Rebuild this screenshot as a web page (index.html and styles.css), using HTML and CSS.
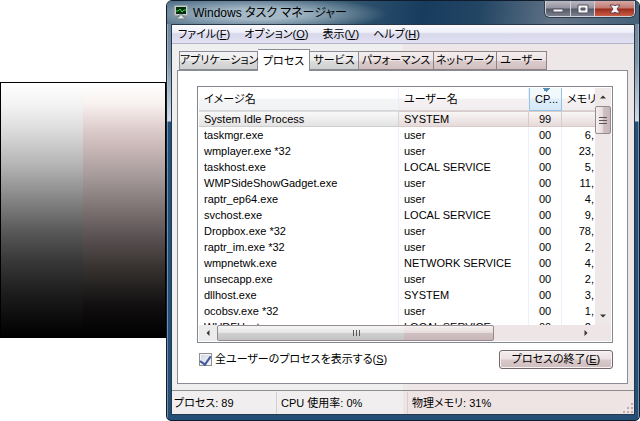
FILE: index.html
```html
<!DOCTYPE html>
<html lang="ja">
<head>
<meta charset="utf-8">
<meta name="viewport" content="width=device-width, initial-scale=1">
<title>Windows タスク マネージャー</title>
<link rel="stylesheet" href="styles.css">
</head>
<body>
<div class="desktop">
  <div class="ramp"></div>
  <main class="window">
    <header class="titlebar">
      <svg class="app-icon" viewBox="0 0 16 16" aria-hidden="true">
        <path d="M1 4v10M1 3h2" stroke="#8d9699" fill="none"/>
        <rect x="3" y="2" width="12" height="9" fill="#dde3dd" stroke="#b4bcba"/>
        <rect x="4" y="3" width="10" height="7" fill="#062c10"/>
        <path d="M4 7h2l2-2 2 3 2-2h2" stroke="#38dd43" fill="none"/>
        <path d="M7 11h4v2h2v2H5v-2h2z" fill="#e1e4e2" stroke="#737b7e"/>
      </svg>
      <h1 class="title">Windows タスク マネージャー</h1>
      <div class="controls">
        <button class="control" aria-label="最小化"><svg viewBox="0 0 12 12"><rect x="1" y="6" width="10" height="3" fill="#f5f5f5" stroke="#595563"/></svg></button>
        <button class="control" aria-label="最大化"><svg viewBox="0 0 12 12"><path fill-rule="evenodd" d="M1 2h10v8H1zM4 5v2h4V5z" fill="#f5f5f5" stroke="#595563"/></svg></button>
        <button class="control close" aria-label="閉じる"><svg viewBox="0 0 12 12"><path d="M1 2h4l1 1 1-1h4L8 6l3 4H7L6 9l-1 1H1l3-4z" fill="#f5f5f5" stroke="#6b4050"/></svg></button>
      </div>
    </header>
    <div class="client">
      <nav class="menu">
        <button>ファイル(<u>F</u>)</button>
        <button>オプション(<u>O</u>)</button>
        <button>表示(<u>V</u>)</button>
        <button>ヘルプ(<u>H</u>)</button>
      </nav>
      <div class="body">
        <div class="tabs" role="tablist">
          <button class="tab" role="tab">アプリケーション</button>
          <button class="tab active" role="tab" aria-selected="true">プロセス</button>
          <button class="tab" role="tab">サービス</button>
          <button class="tab tinted" role="tab">パフォーマンス</button>
          <button class="tab tinted" role="tab">ネットワーク</button>
          <button class="tab tinted" role="tab">ユーザー</button>
        </div>
        <section class="page">
          <div class="list">
            <div class="view">
              <table>
                <colgroup><col class="c-name"><col class="c-user"><col class="c-cpu"><col class="c-mem"></colgroup>
                <thead><tr><th>イメージ名</th><th>ユーザー名</th><th class="sorted">CP...</th><th class="mem">メモリ</th></tr></thead>
                <tbody>
                  <tr class="selected"><td>System Idle Process</td><td>SYSTEM</td><td>99</td><td></td></tr>
                  <tr><td>taskmgr.exe</td><td>user</td><td>00</td><td>6,</td></tr>
                  <tr><td>wmplayer.exe *32</td><td>user</td><td>00</td><td>23,</td></tr>
                  <tr><td>taskhost.exe</td><td>LOCAL SERVICE</td><td>00</td><td>5,</td></tr>
                  <tr><td>WMPSideShowGadget.exe</td><td>user</td><td>00</td><td>11,</td></tr>
                  <tr><td>raptr_ep64.exe</td><td>user</td><td>00</td><td>4,</td></tr>
                  <tr><td>svchost.exe</td><td>LOCAL SERVICE</td><td>00</td><td>9,</td></tr>
                  <tr><td>Dropbox.exe *32</td><td>user</td><td>00</td><td>78,</td></tr>
                  <tr><td>raptr_im.exe *32</td><td>user</td><td>00</td><td>2,</td></tr>
                  <tr><td>wmpnetwk.exe</td><td>NETWORK SERVICE</td><td>00</td><td>4,</td></tr>
                  <tr><td>unsecapp.exe</td><td>user</td><td>00</td><td>2,</td></tr>
                  <tr><td>dllhost.exe</td><td>SYSTEM</td><td>00</td><td>3,</td></tr>
                  <tr><td>ocobsv.exe *32</td><td>user</td><td>00</td><td>1,</td></tr>
                  <tr><td>WUDFHost.exe</td><td>LOCAL SERVICE</td><td>00</td><td>2,</td></tr>
                </tbody>
              </table>
            </div>
            <div class="vscroll">
              <button class="arrow" aria-label="上へ"><svg viewBox="0 0 8 8"><path d="M0 6l4-4 4 4z"/></svg></button>
              <div class="thumb"><svg viewBox="0 0 8 8"><path d="M0 1.5h8M0 4.5h8M0 7.5h8"/></svg></div>
              <button class="arrow end" aria-label="下へ"><svg viewBox="0 0 8 8"><path d="M0 2l4 4 4-4z"/></svg></button>
            </div>
            <div class="hscroll">
              <button class="arrow" aria-label="左へ"><svg viewBox="0 0 8 8"><path d="M6 0L2 4l4 4z"/></svg></button>
              <div class="thumb"><svg viewBox="0 0 8 8"><path d="M1.5 1v6M4.5 1v6M7.5 1v6"/></svg></div>
              <button class="arrow end" aria-label="右へ"><svg viewBox="0 0 8 8"><path d="M2 0l4 4-4 4z"/></svg></button>
            </div>
          </div>
          <div class="actions">
            <label class="show-all"><input type="checkbox" checked>全ユーザーのプロセスを表示する(<u>S</u>)</label>
            <button class="push">プロセスの終了(<u>E</u>)</button>
          </div>
        </section>
      </div>
      <footer class="status">
        <span>プロセス: 89</span>
        <span>CPU 使用率: 0%</span>
        <span>物理メモリ: 31%</span>
        <svg class="grip" viewBox="0 0 12 12" aria-hidden="true"><path d="M9 1h2v2H9zM5 5h2v2H5zM9 5h2v2H9zM1 9h2v2H1zM5 9h2v2H5zM9 9h2v2H9z" fill="#b9adb0"/></svg>
      </footer>
    </div>
  </main>
</div>
</body>
</html>
```

FILE: styles.css
```css
* { box-sizing: border-box; }

body {
  margin: 0;
  background: #fff;
  color: #000;
  font: 11px/16px "Liberation Sans", "Noto Sans CJK JP", sans-serif;
  font-feature-settings: "palt";
}

button {
  margin: 0;
  padding: 0;
  border: 0;
  background: none;
  color: inherit;
  font: inherit;
  font-feature-settings: inherit;
  white-space: nowrap;
}

svg { display: block; }
u { text-underline-offset: 1px; }

.desktop {
  display: grid;
  grid-template-columns: 166px 1fr;
  min-height: 100vh;
}

.ramp {
  height: 256px;
  margin-top: 82px;
  border: 1px solid #000;
  background:
    linear-gradient(#fff, #f8f2f0 8%, #decdcd 18%, #cbb9b9 25%, #a89c9c 36%, #827777 48%, #5c5354 60%, #393432 72%, #242220 80%, #121011 87%, #000) right / 50% 100% no-repeat,
    linear-gradient(#fff, #f0f0f0 10%, #d8d8d8 20%, #b5b5b5 32%, #888 45%, #5a5a5a 58%, #383838 70%, #1c1c1c 83%, #000);
}

/* Window frame */
.window {
  display: flex;
  flex-direction: column;
  min-width: 0;
  padding: 0 4px 5px;
  border: 1px solid #101c2b;
  border-radius: 6px 6px 5px 5px;
  background:
    linear-gradient(90deg, #b9cedd80 1px, transparent 1px calc(100% - 1px), #b9cedd80 0),
    linear-gradient(#668096, #8197a9 60px, #d3dce5 120px, #225078 121px, #245078);
}

.titlebar {
  display: flex;
  align-items: flex-start;
  height: 23px;
  margin: 0 -4px;
  padding: 0 4px 0 5px;
  border-radius: 5px 5px 0 0;
  background:
    radial-gradient(ellipse 130px 18px at 90px 13px, #a4b8c6 30%, #a4b8c600),
    linear-gradient(100deg, #4c6b83, #33566f 38%, #173c5e 54%, #234564 66%, #617386 82%, #45627a);
}

.app-icon { width: 16px; height: 16px; margin-top: 3px; }

.title {
  flex: 1;
  margin: 4px 0 0 5px;
  font-size: 12px;
  font-weight: 400;
  line-height: 16px;
}

.controls {
  display: flex;
  height: 16px;
  border: 1px solid #ced3dc;
  border-top: 0;
  border-radius: 0 0 5px 5px;
  overflow: hidden;
  box-shadow: 0 0 0 1px #303b4b;
}

.control {
  display: grid;
  place-items: center;
  width: 24px;
  border-left: 1px solid #d4d0d7;
  background: linear-gradient(#b9b8c2, #92929f 48%, #515868 52%, #7c7e8b);
}
.control:first-child { border-left: 0; }
.control.close { width: 40px; background: linear-gradient(#d6a8a5, #c07970 48%, #9a2b1c 52%, #ca5d45); }
.control svg { width: 12px; height: 12px; }

.client {
  display: flex;
  flex: 1;
  flex-direction: column;
  min-width: 0;
  border: 1px solid #26384a;
  background: linear-gradient(90deg, #efefef 231px, #eee7e7 0);
}

.menu {
  display: flex;
  gap: 14px;
  height: 19px;
  padding: 0 6px;
  border-bottom: 1px solid #b5b3cb;
  background: linear-gradient(#fbfbfe, #eeeff9 40%, #d8d8eb 50%, #e1e1f2);
}

.body { display: flex; flex: 1; flex-direction: column; padding: 5px 6px 6px 5px; }

.tabs {
  display: grid;
  grid-template-columns: 79px 52px 49px 75px 63px 50px;
  align-items: end;
  height: 21px;
  padding-left: 2px;
}

.tab {
  height: 19px;
  border: 1px solid #898c95;
  border-left-width: 0;
  background: linear-gradient(#f3f3f3, #ebebeb 50%, #dcdcdc 52%, #d0d0d0);
  line-height: 17px;
}
.tab:first-child { border-left-width: 1px; }
.tab.tinted { background: linear-gradient(#f3eeee, #ece2e2 50%, #dccccc 52%, #d2c0c1); border-color: #8d8389; }
.tab.active {
  z-index: 1;
  height: 22px;
  margin-bottom: -1px;
  border-bottom: 0;
  background: #fff;
  line-height: 18px;
}

.page {
  display: flex;
  flex: 1;
  flex-direction: column;
  min-width: 0;
  padding: 15px 14px 14px 19px;
  border: 1px solid #898c95;
  background: #fff;
}

.list {
  display: grid;
  flex: 1;
  grid-template: minmax(0, 1fr) 16px / minmax(0, 1fr) 16px;
  min-height: 0;
  padding: 1px;
  border: 1px solid #828790;
}

/* The table is clipped by the viewport and must not stretch the window */
.view { position: relative; contain: size; overflow: hidden; }

table { width: 420px; border-spacing: 0; table-layout: fixed; }
.c-name { width: 200px; }
.c-user { width: 130px; }
.c-cpu { width: 33px; }
.c-mem { width: 57px; }

th, td {
  height: 16px;
  padding: 0 0 0 5px;
  border-right: 1px solid #e9f0fb;
  font-weight: 400;
  line-height: 16px;
  text-align: left;
  white-space: nowrap;
}
th {
  height: 23px;
  border-bottom: 1px solid #d5d5d5;
  background: linear-gradient(#fff 45%, #f4f5f7 50%, #f1f2f4);
}
th:nth-child(n+2) { background: linear-gradient(#fff 45%, #f5f1f3 50%, #f2edef); }
th.sorted {
  border: 1px solid #96c3e2;
  border-top: 0;
  background:
    conic-gradient(from -45deg at 50% 4px, #568fb5 90deg, transparent 0) center top / 8px 4px no-repeat,
    linear-gradient(#f2f9fd 45%, #dfeefa 50%, #d5e8f8);
}

td:nth-child(3) { padding: 0; text-align: center; }
td:nth-child(4) { padding: 0 24px 0 0; text-align: right; }
.selected td {
  border-color: #d8d4d6;
  border-bottom: 1px solid #cdcdcd;
  border-top: 1px solid #dedede;
  background: linear-gradient(#f8f8f8, #e3e3e3);
  line-height: 14px;
}
.selected td:not(:first-child) { border-color: #dacaca; background: linear-gradient(#f9f6f6, #e6dada); }

.vscroll { display: flex; flex-direction: column; background: #eee8e8; }
.hscroll { display: flex; grid-column: 1 / -1; padding-right: 16px; background: linear-gradient(90deg, #ececec 205px, #eee6e6 0); }

.arrow { display: grid; flex: none; place-items: center; width: 16px; height: 18px; }
.hscroll .arrow { width: 18px; height: 16px; }
.arrow.end { margin: auto 0 0; }
.hscroll .end { margin: 0 0 0 auto; }
.arrow svg { width: 6px; height: 6px; fill: #383435; }

.thumb { display: grid; place-items: center; border: 1px solid #958b8e; border-radius: 2px; }
.thumb svg { width: 8px; height: 8px; stroke: #5a5556; }
.vscroll .thumb { height: 28px; background: linear-gradient(90deg, #f5f0f0, #e7dcdd 48%, #d0c0c2 52%, #c8b6b8); }
.hscroll .thumb {
  flex: 0 0 70%;
  background:
    linear-gradient(#f5f0f0, #e7dcdd 48%, #d0c0c2 52%, #c8b6b8) 186px 0 no-repeat,
    linear-gradient(#f6f6f6, #e5e5e5 48%, #d0d0d0 52%, #c3c3c3);
}

.actions {
  display: flex;
  align-items: center;
  justify-content: space-between;
  height: 20px;
  margin-top: 6px;
}
.show-all { display: flex; align-items: center; white-space: nowrap; }
.show-all input {
  appearance: none;
  display: grid;
  justify-items: center;
  width: 13px;
  height: 13px;
  margin: 0 3px 0 2px;
  border: 1px solid #8e8f8f;
  background: linear-gradient(135deg, #cfd5df, #f7f8fb);
  box-shadow: inset 0 0 0 1px #f4f4f4;
}
.show-all input:checked::after {
  content: "";
  width: 5px;
  height: 9px;
  border: solid #43589e;
  border-width: 0 2px 2px 0;
  transform: rotate(35deg);
}

.push {
  width: 114px;
  height: 19px;
  border: 1px solid #71666a;
  border-radius: 3px;
  background: linear-gradient(#f4eeee, #ebe0e1 48%, #d9c9ca 52%, #cebdbe);
  box-shadow: inset 0 0 0 1px #f8f2f2;
}

.status {
  display: grid;
  grid-template-columns: 104px 131px 1fr 12px;
  align-items: center;
  height: 24px;
  border-top: 1px solid #8f8a8c;
  background: linear-gradient(90deg, #f0eeee 231px, #efe4e4 0);
}
.status span { padding-left: 2px; line-height: 22px; white-space: nowrap; }
.status span + span { padding-left: 4px; border-left: 1px solid #d6cfcf; }
.grip { align-self: end; width: 12px; height: 12px; }
```
